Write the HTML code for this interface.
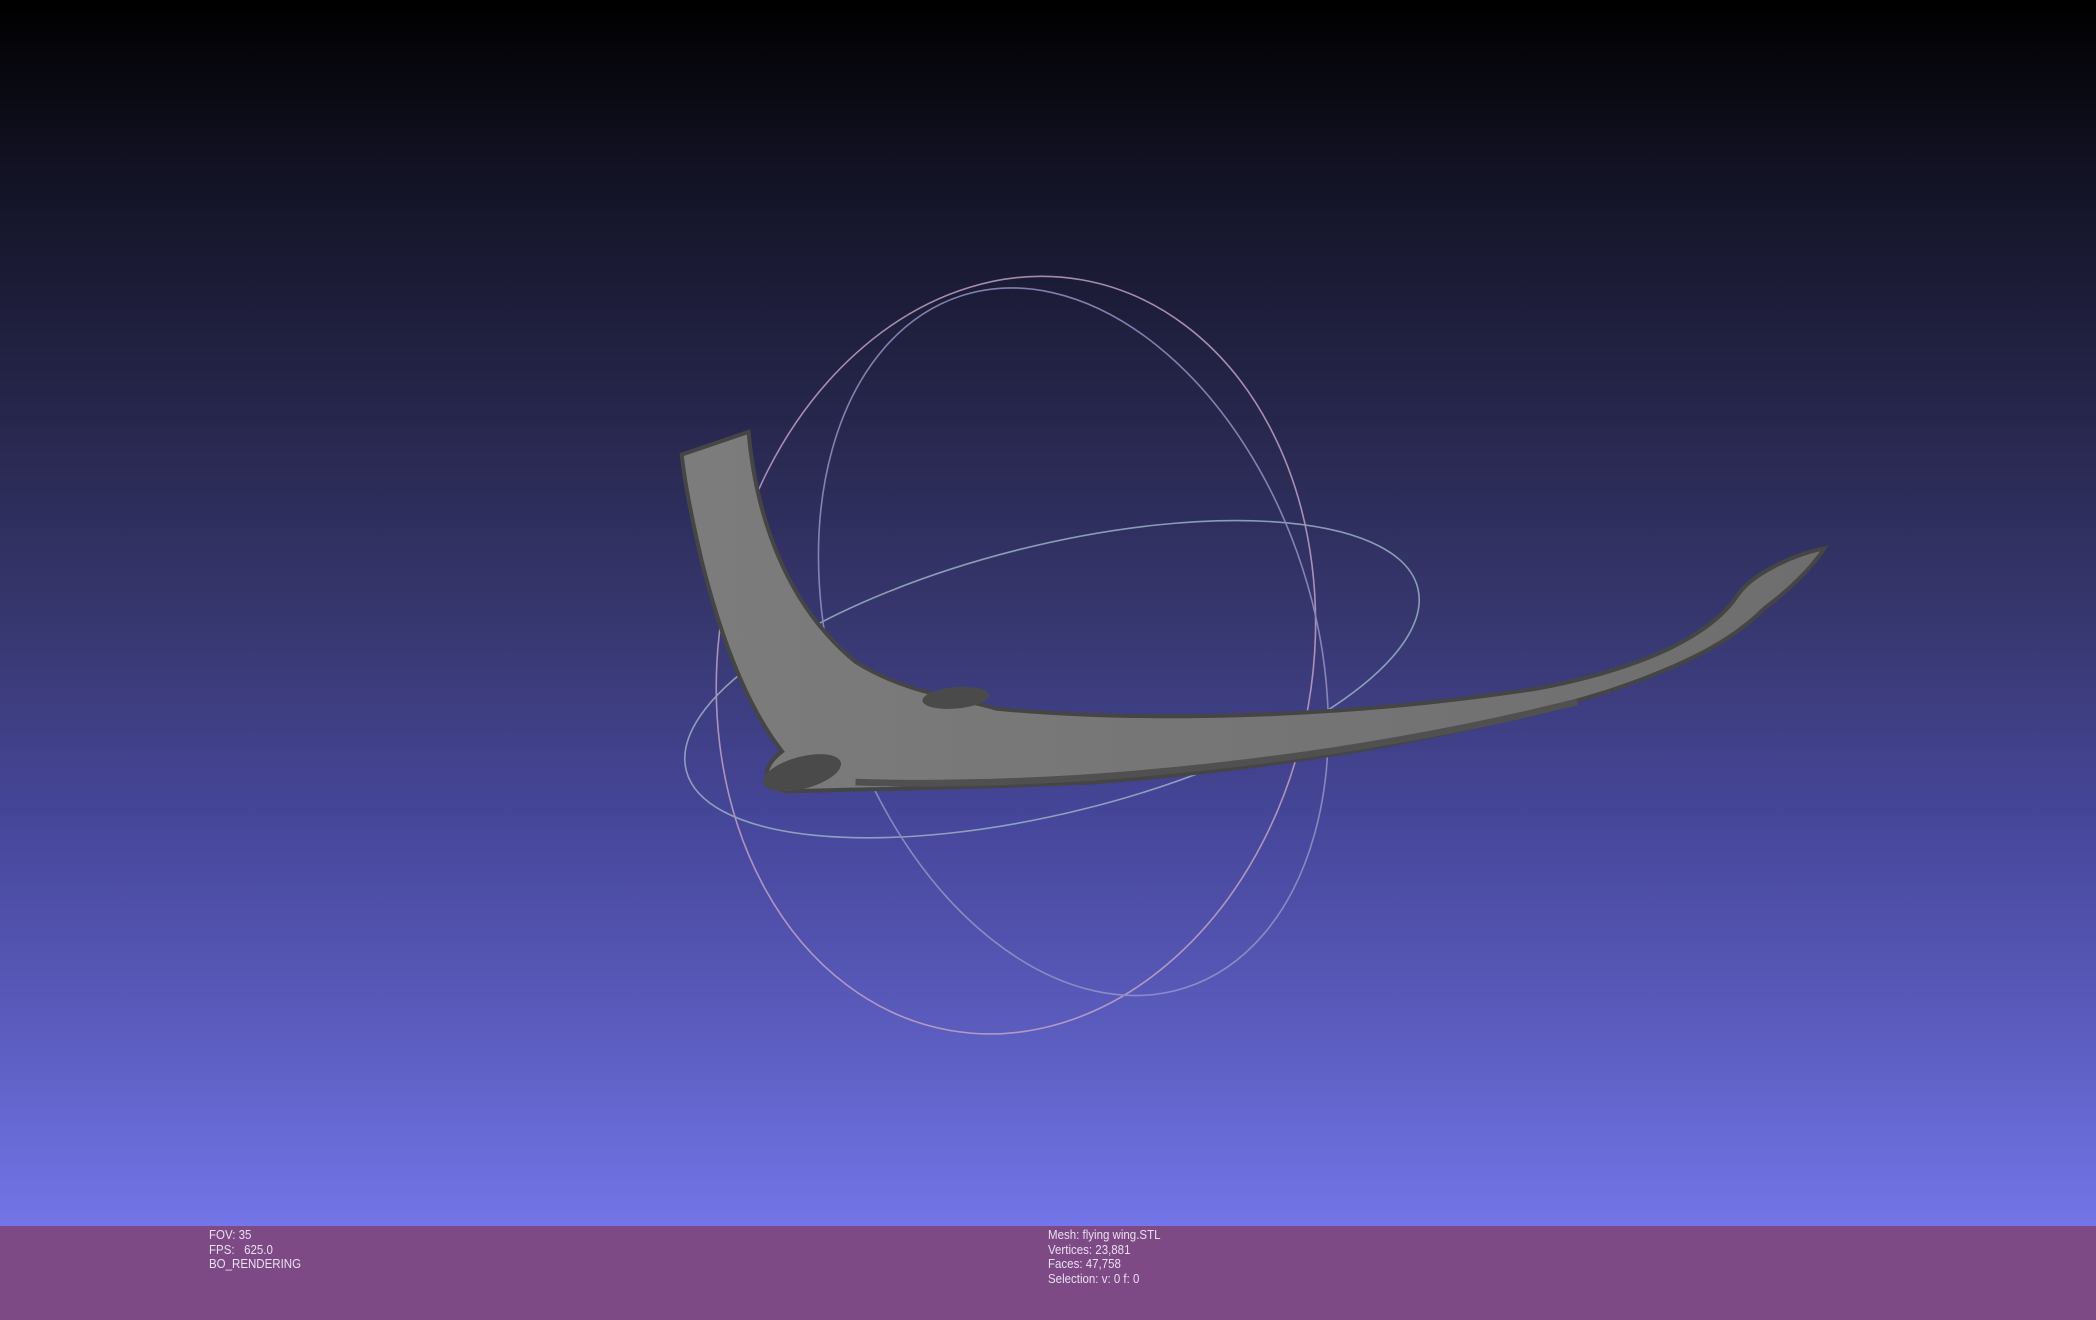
<!DOCTYPE html>
<html><head><style>
html,body{margin:0;padding:0;}
body{width:2096px;height:1320px;position:relative;overflow:hidden;
background:linear-gradient(to bottom,#000000 0px,#131326 180px,#25254a 400px,#37376f 620px,#46469a 820px,#5a5bbc 1020px,#7375e8 1226px);}
.bar{position:absolute;left:0;top:1226px;width:2096px;height:94px;background:#7d4a85;}
.t{position:absolute;color:#e8e0ee;font-family:"Liberation Sans",sans-serif;font-size:12.5px;line-height:14.7px;white-space:pre;transform:scaleX(0.92);transform-origin:left top;}
svg{position:absolute;left:0;top:0;}
</style></head><body>
<svg width="2096" height="1226" viewBox="0 0 1568 917" preserveAspectRatio="none">
<defs>
<linearGradient id="m" x1="0" y1="0" x2="1" y2="0">
<stop offset="0" stop-color="#7c7c7c"/><stop offset="1" stop-color="#6e6e6e"/></linearGradient>
</defs>
<g fill="none" stroke-width="1.2" opacity="0.8">
<ellipse cx="787" cy="508" rx="282" ry="100" transform="rotate(-14 787 508)" stroke="#9fb8c8"/>
<ellipse cx="760" cy="490" rx="222" ry="285" transform="rotate(10 760 490)" stroke="#c8a8c8"/>
<ellipse cx="803" cy="480" rx="180" ry="272" transform="rotate(-18 803 480)" stroke="#9a98c8"/>
</g>
<path d="M510 340 L560 323 C565 380 585 450 640 495 C680 520 720 522 745 530 C850 540 1000 538 1150 515 C1230 500 1280 475 1300 445 C1310 430 1340 415 1365 410 C1355 425 1340 440 1320 455 C1300 475 1270 495 1200 518 C1080 555 950 575 820 585 C720 590 640 590 590 592 C570 590 568 575 585 562 C560 530 540 480 525 420 C518 390 512 360 510 340 Z" fill="url(#m)" stroke="#454545" stroke-width="3"/>
<ellipse cx="600" cy="578" rx="30" ry="12" transform="rotate(-15 600 578)" fill="#4a4a4a"/>
<ellipse cx="715" cy="522" rx="25" ry="8" transform="rotate(-5 715 522)" fill="#4a4a4a"/>
<path d="M640 585 C800 590 1000 570 1180 525" fill="none" stroke="#505050" stroke-width="5"/>
</svg>
<div class="bar"></div>
<div class="t" style="left:209px;top:1228px;">FOV: 35
FPS:   625.0
BO_RENDERING</div>
<div class="t" style="left:1048px;top:1228px;">Mesh: flying wing.STL
Vertices: 23,881
Faces: 47,758
Selection: v: 0 f: 0</div>
</body></html>
